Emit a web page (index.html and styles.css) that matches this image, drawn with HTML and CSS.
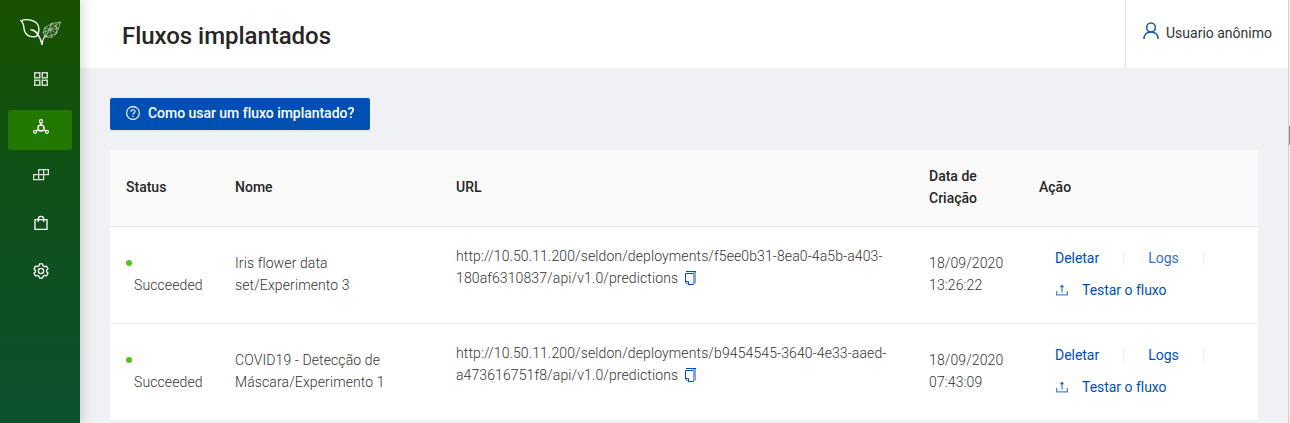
FILE: index.html
```
<!DOCTYPE html>
<html lang="pt-BR">
<head>
<meta charset="utf-8">
<title>Fluxos implantados</title>
<link rel="stylesheet" href="styles.css">
</head>
<body>
<svg class="defs" width="0" height="0">
  <symbol id="copy" viewBox="0 0 14 14"><path d="M1.500 2.500h8v11h-5.500l-2.500-2.500zM1.500 10.500h3v3" fill="none" stroke="#0050b3"/><path d="M2 0.500h10" stroke="#0050b3" fill="none"/><path d="M9 1h3v11.500h-3V3z" fill="#7fa7d9"/></symbol>
  <symbol id="upload" viewBox="0 0 12 12"><path d="M.6 7v3.900h10.800V7" fill="none" stroke="#4d84ca" stroke-width="1.300"/><path d="M6 8.500V2" stroke="#4d84ca" stroke-width="1.300"/><path d="M3.800 3.300 6 .6l2.200 2.700z" fill="#1f65bd"/></symbol>
</svg>
<div class="app">
  <nav class="sidebar">
    <svg class="logo" width="42" height="28" viewBox="0 0 42 28" fill="none" stroke="#fff">
      <path d="M1 1.500c6-1.800 16-.8 17.500 6 .9 4-.2 8-2.500 10C9 19 4.500 15 4 9.500 3.700 5.500 2.500 3 1 1.500zM10.500 10.500c4.500.5 9 5 11.500 15" stroke-width="1.300"/>
      <path d="M22 26c.2-4 1.500-7 3-9.500" stroke-width="1.100"/>
      <path d="M40.500 3l-9 1.500-6.500 4-2 5 2.500 4.500 6 .5 5-4 2-5zM31.500 4.500l-1 6 6 4M25 8.500l5.500 2 8-1M23 13.500l7.500-3L40.500 3M25.500 18l5-7.500 1 8M31.500 4.500l7 5M25 8.500l.5 9.500 11-3.500M31.500 4.500l-6 13.500M36 4l.5 10.500" stroke-width=".55" opacity=".85"/>
    </svg>
    <a class="item"><svg width="16" height="16" viewBox="0 0 16 16" fill="none" stroke="#fff" stroke-opacity=".78" stroke-width="1.500"><path d="M1.750 1.750h5v5h-5zM9.250 1.750h5v5h-5zM1.750 9.250h5v5h-5zM9.250 9.250h5v5h-5z"/></svg></a>
    <a class="item active"><svg width="16" height="16" viewBox="0 0 16 16" fill="none" stroke="#fff" stroke-width="1.200"><circle cx="8" cy="9" r="3" stroke-width="1.400"/><circle cx="8" cy="2.200" r="1.600"/><circle cx="2.100" cy="12.800" r="1.500"/><circle cx="13.900" cy="12.800" r="1.500"/><path d="M8 3.800V6M5.500 10.500l-2.200 1.500M10.500 10.500l2.200 1.500"/></svg></a>
    <a class="item"><svg width="16" height="16" viewBox="0 0 16 16" fill="none" stroke="#fff" stroke-opacity=".85" stroke-width="1.300"><path d="M5.700 2.600h9.700v5H10.600v5H.600v-5h5zM5.700 7.600h5v-5M5.700 7.600v5"/></svg></a>
    <a class="item"><svg width="16" height="16" viewBox="0 0 16 16" fill="none" stroke="#fff" stroke-width="1.300"><path d="M2 4.700h12v9.700H2zM5.300 7V4a2.700 2.700 0 0 1 5.400 0v3"/></svg></a>
    <a class="item"><svg width="16" height="16" viewBox="0 0 16 16" fill="none" stroke="#fff" stroke-width="1.300" stroke-linejoin="round"><circle cx="8" cy="8" r="2.600"/><path d="M6.500.8h3l.5 2 1.500.8 2-.5 1.500 2.600-1.400 1.500v1.600l1.400 1.500-1.500 2.600-2-.5-1.500.8-.5 2h-3l-.5-2-1.500-.8-2 .5L1 10.300l1.400-1.500V7.200L1 5.700l1.500-2.600 2 .5L6 2.800z"/></svg></a>
  </nav>
  <div class="main">
    <header class="header">
      <h1>Fluxos implantados</h1>
      <div class="user"><svg width="16" height="18" viewBox="0 0 16 18" fill="none" stroke="#0f5bb8" stroke-width="1.500"><circle cx="8" cy="5.500" r="4.400"/><path d="M.9 17c.2-4.400 3-7.100 7.100-7.100s6.900 2.700 7.100 7.100"/></svg><span>Usuario anônimo</span></div>
    </header>
    <main class="content">
      <button class="help"><svg width="14" height="14" viewBox="0 0 14 14" fill="none" stroke="#fff"><circle cx="7" cy="7" r="6.400" stroke-width="1.100"/><path d="M5 5.700c0-2.700 4-2.600 4-.2C9 7 7 7 7 8.600" stroke-width="1.100"/><path d="M7 9.600v1.200" stroke-width="1.200"/></svg><span>Como usar um fluxo implantado?</span></button>
      <table>
        <colgroup><col class="c-status"><col class="c-name"><col class="c-url"><col class="c-date"><col class="c-action"></colgroup>
        <thead><tr><th>Status</th><th>Nome</th><th>URL</th><th>Data de<br>Criação</th><th>Ação</th></tr></thead>
        <tbody>
          <tr>
            <td><div class="dot"></div><div class="state">Succeeded</div></td>
            <td>Iris flower data<br>set/Experimento 3</td>
            <td><p class="url">http://10.50.11.200/seldon/deployments/f5ee0b31-8ea0-4a5b-a403-<br>180af6310837/api/v1.0/predictions<svg class="copy"><use href="#copy"/></svg></p></td>
            <td>18/09/2020<br>13:26:22</td>
            <td class="cell-actions"><div class="actions"><a>Deletar</a><i></i><a class="hover">Logs</a><i></i></div><div class="actions"><a class="test"><svg class="upload"><use href="#upload"/></svg>Testar o fluxo</a></div></td>
          </tr>
          <tr>
            <td><div class="dot"></div><div class="state">Succeeded</div></td>
            <td>COVID19 - Detecção de<br>Máscara/Experimento 1</td>
            <td><p class="url">http://10.50.11.200/seldon/deployments/b9454545-3640-4e33-aaed-<br>a473616751f8/api/v1.0/predictions<svg class="copy"><use href="#copy"/></svg></p></td>
            <td>18/09/2020<br>07:43:09</td>
            <td class="cell-actions"><div class="actions"><a>Deletar</a><i></i><a>Logs</a><i></i></div><div class="actions"><a class="test"><svg class="upload"><use href="#upload"/></svg>Testar o fluxo</a></div></td>
          </tr>
        </tbody>
      </table>
    </main>
  </div>
  <div class="edge"><b></b></div>
</div>
</body>
</html>
```
FILE: styles.css
```
* { box-sizing: border-box; }
body { margin: 0; font: 300 14px/22px Roboto, sans-serif; color: #333; overflow: hidden; }
.defs { display: block; position: absolute; }
.app { display: flex; height: 423px; background: #f0f1f5; }
.sidebar { width: 80px; flex: none; background: linear-gradient(#175200 0, #10501c 50%, #0c502e 100%); box-shadow: 2px 0 12px rgba(0,0,0,.17); z-index: 1; display: flex; flex-direction: column; align-items: center; gap: 8px; padding-top: 19px; }
.logo { margin: 0 0 7px 1px; flex: none; }
.item { width: 64px; height: 40px; flex: none; display: flex; align-items: center; justify-content: center; border-radius: 2px; padding: 0 0 6px 2px; }
.active { background: #237804; }
.main { width: 1208px; flex: none; }
.header { height: 68px; background: #fff; display: flex; justify-content: space-between; }
h1 { margin: 4px 0 0 42px; font-size: 24px; line-height: 64px; font-weight: 500; letter-spacing: -.04px; color: #262626; }
.user { width: 163px; border-left: 1px solid #e4e4e4; display: flex; align-items: center; padding: 0 0 2px 17px; gap: 7px; font-weight: 400; color: #333; white-space: nowrap; }
.user svg { margin-bottom: 4px; }
.content { padding: 30px 30px 0; }
.help { display: flex; align-items: center; gap: 8px; width: 260px; height: 32px; padding: 0 0 2px 16px; border: 0; border-radius: 2px; background: #0050b3; color: #fff; font: 500 14px/22px Roboto, sans-serif; letter-spacing: -.03px; box-shadow: 0 2px 0 rgba(0,0,0,.045); white-space: nowrap; }
table { width: 1148px; margin-top: 20px; table-layout: fixed; border-collapse: separate; border-spacing: 0; background: #fff; }
.c-status { width: 109px; } .c-name { width: 221px; } .c-url { width: 473px; } .c-date { width: 110px; } .c-action { width: 235px; }
th { height: 77px; padding: 0 16px 3px; text-align: left; font-weight: 500; color: #262626; background: #fafafa; border-bottom: 1px solid #ececec; }
td { height: 97px; padding: 0 16px 2px; border-bottom: 1px solid #ececec; white-space: nowrap; letter-spacing: .11px; }
tr:last-child td { border-bottom-color: #f0f0f0; }
.dot { width: 6px; height: 6px; border-radius: 50%; background: #52c41a; margin: 8px 0; }
.state { padding-left: 8px; }
.url { margin: 0 0 14px; }
.copy { width: 14px; height: 14px; margin-left: 5.5px; vertical-align: -2px; }
.cell-actions { padding-bottom: 0; letter-spacing: -.03px; }
.actions { height: 32px; display: flex; align-items: center; padding-bottom: 2px; color: #0050b3; font-weight: 400; }
.actions a { padding: 0 16px; }
.actions i { width: 1px; height: 13px; margin: 0 8px; background: #efefef; }
.hover { color: #3370c0; }
.actions .test { display: flex; align-items: center; gap: 14px; padding-left: 17px; }
.upload { width: 12px; height: 12px; }
.edge { width: 2px; height: 423px; background: #f5f5f5; border-left: 1px solid #cfcfcf; padding-top: 126px; }
.edge b { display: block; height: 19px; background: #8c8c8c; }
```
